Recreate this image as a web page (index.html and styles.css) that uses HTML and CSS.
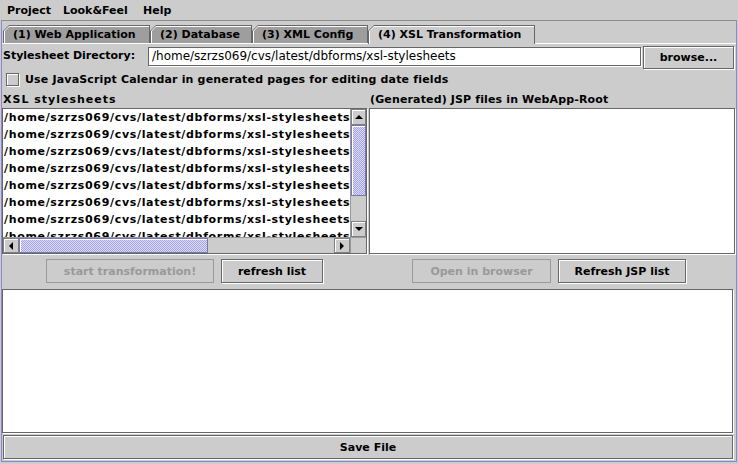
FILE: index.html
```html
<!DOCTYPE html>
<html>
<head>
<meta charset="utf-8">
<title>XSL Transformation</title>
<link rel="stylesheet" href="styles.css">
</head>
<body>
<div class="menubar">
  <span class="menu m1">Project</span>
  <span class="menu m2">Look&amp;Feel</span>
  <span class="menu m3">Help</span>
</div>
<div class="frame">
  <div class="tabstrip">
    <div class="tab t1"><div class="hl"><div class="face">(1) Web Application</div></div></div>
    <div class="tab t2"><div class="hl"><div class="face">(2) Database</div></div></div>
    <div class="tab t3"><div class="hl"><div class="face">(3) XML Config</div></div></div>
    <div class="tab t4 selected"><div class="hl"><div class="face">(4) XSL Transformation</div></div></div>
  </div>
  <div class="panel">
    <div class="dir-row">
      <div class="dir-label">Stylesheet Directory:</div>
      <div class="field">/home/szrzs069/cvs/latest/dbforms/xsl-stylesheets</div>
      <div class="btn browse">browse...</div>
    </div>
    <div class="check-row">
      <div class="cb"></div>
      <div class="cb-label">Use JavaScript Calendar in generated pages for editing date fields</div>
    </div>
    <div class="cols heads">
      <div class="head h-xsl">XSL stylesheets</div>
      <div class="head h-jsp">(Generated) JSP files in WebApp-Root</div>
    </div>
    <div class="cols lists">
      <div class="scroll">
        <div class="viewport">
          <div class="row">/home/szrzs069/cvs/latest/dbforms/xsl-stylesheets/dbforms_form.xsl</div>
          <div class="row">/home/szrzs069/cvs/latest/dbforms/xsl-stylesheets/dbforms_list.xsl</div>
          <div class="row">/home/szrzs069/cvs/latest/dbforms/xsl-stylesheets/dbforms_menu.xsl</div>
          <div class="row">/home/szrzs069/cvs/latest/dbforms/xsl-stylesheets/dbforms_list_and_form.xsl</div>
          <div class="row">/home/szrzs069/cvs/latest/dbforms/xsl-stylesheets/dbforms_sorting_list.xsl</div>
          <div class="row">/home/szrzs069/cvs/latest/dbforms/xsl-stylesheets/dbforms_html_list.xsl</div>
          <div class="row">/home/szrzs069/cvs/latest/dbforms/xsl-stylesheets/dbforms_html_form.xsl</div>
          <div class="row">/home/szrzs069/cvs/latest/dbforms/xsl-stylesheets/dbforms_html_menu.xsl</div>
        </div>
        <div class="vbar">
          <div class="arrow"><span class="tri up"></span></div>
          <div class="thumb vthumb"></div>
          <div class="track"></div>
          <div class="arrow"><span class="tri down"></span></div>
        </div>
        <div class="hbar">
          <div class="arrow"><span class="tri left"></span></div>
          <div class="thumb hthumb"></div>
          <div class="track"></div>
          <div class="arrow"><span class="tri right"></span></div>
        </div>
        <div class="corner"></div>
      </div>
      <div class="scroll plain"></div>
    </div>
    <div class="cols actions">
      <div class="btn-group">
        <div class="btn disabled w-start">start transformation!</div>
        <div class="btn w-refresh">refresh list</div>
      </div>
      <div class="btn-group right-group">
        <div class="btn disabled w-open">Open in browser</div>
        <div class="btn w-jsp">Refresh JSP list</div>
      </div>
    </div>
    <div class="textarea"></div>
    <div class="btn save">Save File</div>
  </div>
</div>
</body>
</html>
```
FILE: styles.css
```css
* { box-sizing: border-box; }
html, body { margin: 0; padding: 0; }
body {
  width: 738px;
  height: 464px;
  overflow: hidden;
  background: #cccccc;
  color: #000;
  font-family: "DejaVu Sans", "Liberation Sans", sans-serif;
  font-size: 11px;
  font-weight: bold;
}

/* menu bar */
.menubar {
  height: 20px;
  display: flex;
  padding: 1px 0 0 7px;
  line-height: 19px;
}
.m1 { width: 56px; }
.m2 { width: 80px; }

/* window frame */
.frame {
  width: 736px;
  height: 442px;
  margin-left: 1px;
  border-top: 1px solid #8e8e8e;
  border-left: 1px solid #8787d4;
  border-right: 1px solid #8787d4;
  border-bottom: 1px solid #8787d4;
  display: flex;
  flex-direction: column;
}

/* tabs */
.tabstrip {
  height: 23px;
  display: flex;
  align-items: flex-end;
  padding-left: 1px;
  background: linear-gradient(#fff, #fff) left bottom / 100% 1px no-repeat;
}
.tab {
  height: 18px;
  margin-bottom: 1px;
  background: #666;
  padding: 1px 1px 0 1px;
  clip-path: polygon(6px 0, 100% 0, 100% 100%, 0 100%, 0 6px);
}
.tab .hl {
  height: 100%;
  background: #fff;
  padding: 1px 0 0 1px;
  clip-path: polygon(5px 0, 100% 0, 100% 100%, 0 100%, 0 5px);
}
.tab .face {
  height: 100%;
  background: #9e9e9e;
  clip-path: polygon(4px 0, 100% 0, 100% 100%, 0 100%, 0 4px);
  padding-left: 8px;
  line-height: 15px;
  white-space: nowrap;
}
.tab.selected { height: 19px; margin-bottom: 0; }
.tab.selected .face { background: #cccccc; }
.t1 { width: 147px; }
.t2 { width: 102px; }
.t3 { width: 116px; }
.t4 { width: 167px; }

/* panel */
.panel {
  flex: 1;
  display: flex;
  flex-direction: column;
}
.dir-row {
  margin-top: 2px;
  height: 24px;
  display: flex;
  align-items: flex-start;
}
.dir-label {
  width: 146px;
  padding-left: 1px;
  padding-top: 1px;
  line-height: 17px;
  white-space: nowrap;
}
.field {
  width: 493px;
  height: 19px;
  margin-top: 1px;
  margin-right: 2px;
  background: #fff;
  border: 1px solid #666;
  box-shadow: 1px 1px 0 #fff;
  font-weight: normal;
  font-size: 12px;
  line-height: 16px;
  padding-left: 3px;
  white-space: nowrap;
  overflow: hidden;
}

.btn {
  height: 24px;
  background: #cccccc;
  border: 1px solid #666;
  box-shadow: 1px 1px 0 #fff, inset 1px 1px 0 #fff;
  display: flex;
  align-items: center;
  justify-content: center;
  white-space: nowrap;
}
.btn.disabled {
  color: #999;
  border-color: #9a9a9a;
  box-shadow: none;
}
.browse { width: 91px; height: 23px; }

.check-row {
  height: 22px;
  display: flex;
  align-items: flex-start;
}
.cb {
  width: 13px;
  height: 13px;
  margin: 3px 0 0 4px;
  border: 1px solid #666;
  box-shadow: 1px 1px 0 #fff, inset 1px 1px 0 #fff;
}
.cb-label {
  margin-left: 6px;
  line-height: 16px;
  padding-top: 2px;
  white-space: nowrap;
  letter-spacing: 0.17px;
}

.cols {
  display: grid;
  grid-template-columns: 366px 367px;
  column-gap: 1px;
}
.heads { height: 16px; line-height: 16px; }
.head { padding-left: 1px; white-space: nowrap; }
.h-xsl { letter-spacing: 1px; }
.h-jsp { letter-spacing: 0.14px; }

.lists { height: 146px; }
.scroll {
  height: 146px;
  width: 365px;
  background: #fff;
  border: 1px solid #666;
  box-shadow: 1px 1px 0 #fff;
  display: grid;
  grid-template-columns: 347px 16px;
  grid-template-rows: 128px 16px;
}
.scroll.plain { width: 366px; display: block; }
.viewport {
  overflow: hidden;
  padding-left: 1px;
}
.row {
  height: 17px;
  line-height: 17px;
  white-space: nowrap;
  letter-spacing: 0.67px;
}

.vbar, .hbar {
  display: flex;
  background: #cccccc;
}
.vbar { flex-direction: column; border-left: 1px solid #999; }
.hbar { flex-direction: row; border-top: 1px solid #999; }
.arrow {
  flex: 0 0 16px;
  background: #cccccc;
  border: 1px solid #808080;
  box-shadow: inset 1px 1px 0 #fff;
  display: flex;
  align-items: center;
  justify-content: center;
}
.vbar .arrow { height: 16px; }
.hbar .arrow { width: 16px; }
.track { flex: 1; background: #cccccc; }
.thumb {
  background-color: #ccccff;
  background-image: repeating-conic-gradient(#a6a6dc 0 25%, #dadaff 0 50%);
  background-size: 2px 2px;
  border: 1px solid #7777b4;
  box-shadow: inset 1px 1px 0 #fff;
}
.vthumb { flex: 0 0 71px; }
.hthumb { flex: 0 0 189px; }
.corner { background: #cccccc; border-top: 1px solid #999; border-left: 1px solid #999; }
.tri { width: 0; height: 0; }
.tri.up { border-left: 4px solid transparent; border-right: 4px solid transparent; border-bottom: 4px solid #000; }
.tri.down { border-left: 4px solid transparent; border-right: 4px solid transparent; border-top: 4px solid #000; }
.tri.left { border-top: 4px solid transparent; border-bottom: 4px solid transparent; border-right: 4px solid #000; }
.tri.right { border-top: 4px solid transparent; border-bottom: 4px solid transparent; border-left: 4px solid #000; }

.actions { margin-top: 5px; height: 24px; }
.btn-group {
  display: flex;
  justify-content: center;
  gap: 7px;
}
.right-group { padding-right: 6px; }
.w-start { width: 168px; }
.w-refresh { width: 102px; margin-right: 1px; }
.w-open { width: 139px; }
.w-jsp { width: 128px; margin-right: 1px; }

.textarea {
  margin-top: 6px;
  width: 731px;
  height: 144px;
  background: #fff;
  border: 1px solid #666;
  box-shadow: 1px 1px 0 #fff;
}
.save {
  margin-top: 2px;
  margin-left: 1px;
  width: 730px;
  height: 24px;
}
```
